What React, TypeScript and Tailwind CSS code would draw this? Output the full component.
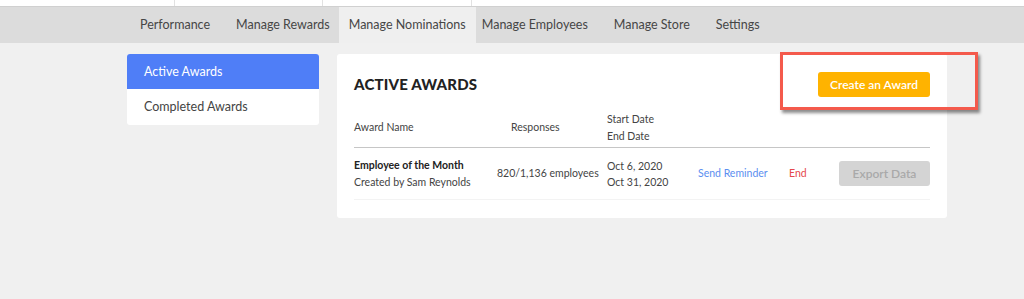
import React from 'react'

const tabs = [
  { label: 'Performance', cls: 'px-[13px]' },
  { label: 'Manage Rewards', cls: 'pl-[13px] pr-[9px]' },
  { label: 'Manage Nominations', cls: 'px-[10px] bg-[#efefef]' },
  { label: 'Manage Employees', cls: 'pl-[6px] pr-[13px]' },
  { label: 'Manage Store', cls: 'px-[13px]' },
  { label: 'Settings', cls: 'px-[13px]' },
]

export default function App() {
  return (
    <div className="w-[1024px] h-[299px] bg-[#f0f0f0] overflow-hidden" style={{ fontFamily: 'Lato, "Noto Sans", sans-serif' }}>
      {/* top strip */}
      <div className="h-[6px] bg-white flex">
        <div className="w-[175px] border-r border-[#e2e2e2]" />
        <div className="w-[148px] border-r border-[#e2e2e2]" />
        <div className="w-[149px] border-r border-[#e2e2e2]" />
      </div>

      {/* nav */}
      <div className="h-[37px] bg-[#dcdcdc] border-t border-[#d0d0d0] flex pl-[127px]">
        {tabs.map(t => (
          <div key={t.label} className={`h-full flex items-center text-[12.5px] text-[#464646] ${t.cls}`}>
            {t.label}
          </div>
        ))}
      </div>

      <div className="flex pl-[127px] pt-[11px] gap-[18px] items-start">
        {/* sidebar */}
        <div className="w-[192px] bg-white rounded-[3px] overflow-hidden">
          <div className="h-[35px] bg-[#4f7ef7] text-white text-[12.5px] flex items-center pl-[17px] pt-[1px]">Active Awards</div>
          <div className="h-[36px] text-[#444] text-[12.5px] flex items-center pl-[17px] pt-[1px]">Completed Awards</div>
        </div>

        {/* card */}
        <div className="relative w-[610px] bg-white rounded-[3px] px-[17px] pt-[18px] pb-[18px]">
          <div className="flex items-center justify-between h-[25px]">
            <h2 className="text-[15px] font-black text-[#222] tracking-[0.2px]">ACTIVE AWARDS</h2>
            <button className="h-[25px] w-[112px] rounded-[3px] bg-[#ffb300] text-white text-[12px] font-semibold">
              Create an Award
            </button>
          </div>

          <div className="mt-[12px] h-[39px] flex items-center border-b border-[#c6c6c6] text-[10.5px] text-[#444]">
            <div className="w-[143px]">Award Name</div>
            <div className="w-[110px] pl-[14px]">Responses</div>
            <div className="leading-[17px]">
              <div>Start Date</div>
              <div>End Date</div>
            </div>
          </div>

          <div className="h-[52px] flex items-center border-b border-[#f3f3f3] text-[10.5px] text-[#444]">
            <div className="w-[143px] leading-[17px]">
              <div className="font-bold text-[#222]">Employee of the Month</div>
              <div>Created by Sam Reynolds</div>
            </div>
            <div className="w-[110px]">820/1,136 employees</div>
            <div className="w-[91px] leading-[16px]">
              <div>Oct 6, 2020</div>
              <div>Oct 31, 2020</div>
            </div>
            <div className="w-[91px] text-[#5b8ef0]">Send Reminder</div>
            <div className="text-[#e5484d]">End</div>
            <div className="flex-1 flex justify-end">
              <button className="h-[25px] w-[91px] rounded-[3px] bg-[#d4d4d4] text-[#a9a9a9] text-[12px] font-semibold">
                Export Data
              </button>
            </div>
          </div>

          {/* annotation box */}
          <div className="absolute left-[443px] top-[-2px] w-[198px] h-[58px] border-[3px] border-[#f45a4c] shadow-[2px_3px_3px_rgba(0,0,0,0.45)]" />
        </div>
      </div>
    </div>
  )
}
